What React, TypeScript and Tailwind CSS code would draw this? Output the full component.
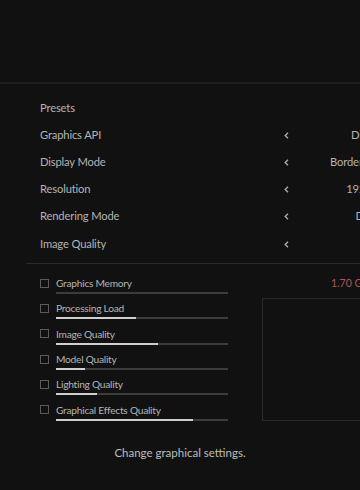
import React from "react";

const rows = [
  { label: "Presets", value: "High", arrows: false },
  { label: "Graphics API", value: "DirectX 12", arrows: true },
  { label: "Display Mode", value: "Borderless Window", arrows: true },
  { label: "Resolution", value: "1920 x 1080", arrows: true },
  { label: "Rendering Mode", value: "Deferred", arrows: true },
  { label: "Image Quality", value: "High", arrows: true },
];

const checks = [
  { label: "Graphics Memory", fill: null as number | null },
  { label: "Processing Load", fill: 80 },
  { label: "Image Quality", fill: 102 },
  { label: "Model Quality", fill: 29 },
  { label: "Lighting Quality", fill: 41 },
  { label: "Graphical Effects Quality", fill: 137 },
];

function Chevron() {
  return (
    <svg width="5" height="7" viewBox="0 0 5 7" className="block">
      <path d="M4 0.8 L1.2 3.5 L4 6.2" stroke="#b0b0b0" strokeWidth="1.3" fill="none" />
    </svg>
  );
}

export default function App() {
  return (
    <div
      className="w-[360px] h-[490px] bg-[#111111] overflow-hidden relative text-[#b4b4b4]"
      style={{ fontFamily: "Lato, 'Open Sans', sans-serif" }}
    >
      <div className="w-[720px]">
        <div className="h-[83px] border-b border-[#1d1d1d]" />
        <div className="h-px bg-[#202020]" />
        <div className="pt-[10.5px] flex flex-col">
          {rows.map((r) => (
            <div key={r.label} className="h-[27.2px] flex items-center text-[11.2px] tracking-[-0.15px]">
              <div className="w-[284px] pl-[40px]">{r.label}</div>
              <div className="w-[12px] flex items-center">{r.arrows && <Chevron />}</div>
              <div className="w-[162px] text-center">{r.value}</div>
            </div>
          ))}
        </div>
        <div className="mt-[5px] ml-[26px] h-px bg-[#2a2a2a]" />
        <div className="flex pt-[12.5px]">
          <div className="w-[262px] pl-[40px] flex flex-col gap-[7.3px]">
            {checks.map((c) => (
              <div key={c.label} className="flex">
                <div className="w-[9px] h-[9px] border border-[#5a5a5a] mt-[2.5px] mr-[7px]" />
                <div className="w-[172px] flex flex-col">
                  <div className="h-[16px] leading-[14px] text-[10.2px] tracking-[-0.25px]">{c.label}</div>
                  <div className="h-[2px] bg-[#3c3c3c] flex">
                    {c.fill !== null && (
                      <div className="h-full bg-[#cfcfcf]" style={{ width: c.fill }} />
                    )}
                  </div>
                </div>
              </div>
            ))}
          </div>
          <div className="flex flex-col">
            <div className="h-[18px] leading-[14px] text-[10.5px] text-[#a85858] pl-[69px]">1.70 GB</div>
            <div className="mt-[4px] w-[300px] h-[123px] border border-[#2a2a2a]" />
          </div>
        </div>
      </div>
      <div className="w-[360px] text-center text-[11.5px] text-[#bdbdbd] mt-[22.5px]">
        Change graphical settings.
      </div>
    </div>
  );
}
